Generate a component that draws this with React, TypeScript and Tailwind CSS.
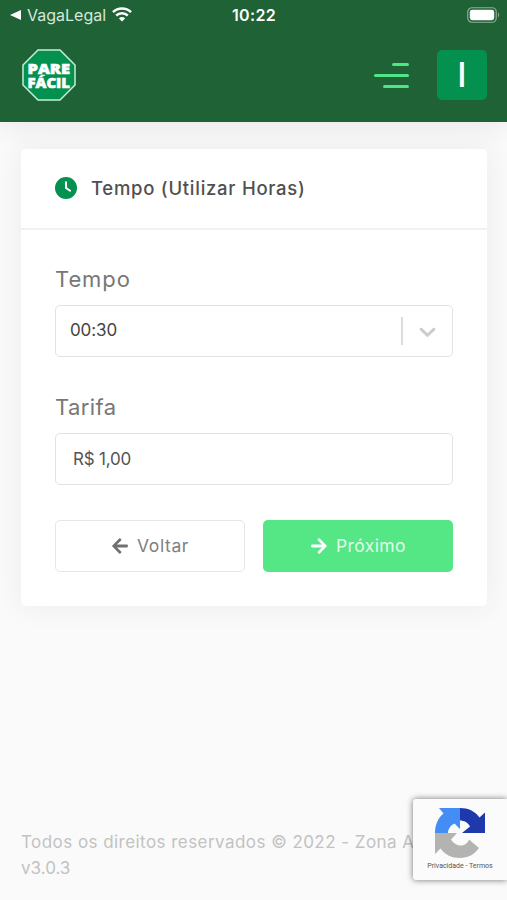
import React from 'react';
import { FaArrowLeft, FaArrowRight } from 'react-icons/fa';
import { FaClock } from 'react-icons/fa6';

const StatusBar: React.FC = () => (
    <div className="relative flex h-[30px] items-center justify-between pl-[10px] pr-[7px] text-white">
        <div className="flex items-center">
            <svg width="11" height="10" viewBox="0 0 11 10" fill="currentColor">
                <path d="M0 5 11 0v10z" />
            </svg>
            <span className="ml-[6px] text-[16px] leading-none text-[#d5e8da]">VagaLegal</span>
            <svg className="mb-[2px] ml-[6px]" width="20" height="15" viewBox="0 0 20 15" fill="none" stroke="currentColor">
                <path d="M1 5.1a13 13 0 0 1 18 0" strokeWidth="2.6" />
                <path d="M4.2 8.5a8.4 8.4 0 0 1 11.600 0" strokeWidth="2.5" />
                <path d="M10 14.6 6.9 11.4a4.6 4.6 0 0 1 6.2 0z" fill="currentColor" stroke="none" />
            </svg>
        </div>
        <span className="absolute left-[232px] text-[16px] font-semibold leading-none tracking-[0.35px]">10:22</span>
        <svg className="mb-[1px]" width="33" height="16" viewBox="0 0 33 16">
            <rect x="0.75" y="0.75" width="28.5" height="14.5" rx="4.2" fill="none" stroke="#8eae98" strokeWidth="1.2" />
            <rect x="2.8" y="2.8" width="24.4" height="10.4" rx="2.4" fill="#fff" />
            <path d="M31 5.6c1.6.8 1.6 4 0 4.8z" fill="#8eae98" />
        </svg>
    </div>
);

const Logo: React.FC = () => (
    <svg width="54" height="52" viewBox="0 0 54 52">
        <path
            d="M16 1h22l15 15v20L38 51H16L1 36V16z"
            fill="#04904f"
            stroke="#c4efd5"
            strokeWidth="1.5"
        />
        <g
            fill="#fff"
            stroke="#fff"
            strokeWidth="0.6"
            fontFamily="'Open Sans', 'Liberation Sans', sans-serif"
            fontWeight="800"
            fontSize="14.5"
        >
            <text x="5.5" y="25" textLength="42.5" lengthAdjust="spacingAndGlyphs">PARE</text>
            <text x="5.5" y="39" textLength="42.5" lengthAdjust="spacingAndGlyphs">FÁCIL</text>
        </g>
    </svg>
);

const Header: React.FC = () => (
    <header className="relative h-[122px] bg-[#1e6236] shadow-[0_0_28px_rgba(60,60,60,0.12)]">
        <StatusBar />
        <div className="flex items-center pl-[22px] pr-5 pt-[19px]">
            <Logo />
            <button type="button" className="ml-auto flex w-[35px] flex-col items-end gap-[8px]">
                <span className="h-[3px] w-[17px] rounded-sm bg-[#50e586]" />
                <span className="h-[3px] w-[35px] rounded-sm bg-[#50e586]" />
                <span className="h-[3px] w-[26px] rounded-sm bg-[#50e586]" />
            </button>
            <div className="ml-[28px] flex size-[50px] items-center justify-center rounded-[5px] bg-[#04904f]">
                <span className="text-[34px] font-medium leading-none text-white">I</span>
            </div>
        </div>
    </header>
);

interface FieldProps {
    label: string;
    labelClass: string;
    children: React.ReactNode;
}

const Field: React.FC<FieldProps> = ({ label, labelClass, children }) => (
    <div>
        <label className={`block h-[26px] text-[22px] leading-[26px] text-[#777] ${labelClass}`}>{label}</label>
        <div className="mt-[13px] flex h-[52px] items-center rounded-[5px] border-[1.5px] border-[#e3e3e3] text-[#555]">
            {children}
        </div>
    </div>
);

const TimeCard: React.FC = () => (
    <section className="ml-[21px] mr-5 mt-[27px] h-[457px] rounded-[5px] bg-white shadow-[0_0_28px_rgba(60,60,60,0.08)]">
        <div className="flex h-[81px] items-center border-b-2 border-[#f0f1f3] pl-[34px]">
            <FaClock className="mb-[2px] size-[22px] text-[#04904f]" />
            <h3 className="ml-[14px] text-[18.5px] font-medium tracking-[0.73px] text-[#505050]">
                Tempo (Utilizar Horas)
            </h3>
        </div>
        <div className="px-[34px] pt-[36px]">
            <Field label="Tempo" labelClass="tracking-[0.9px]">
                <span className="flex-1 pl-[14px] text-[17px] tracking-[-0.1px] text-[#444]">00:30</span>
                <span className="h-[28px] w-[2px] bg-[#dcdcdc]" />
                <svg className="mx-[11px]" width="27" height="27" viewBox="0 0 20 20" fill="#ccc">
                    <path d="M4.516 7.548c0.436-0.446 1.043-0.481 1.576 0l3.908 3.747 3.908-3.747c0.533-0.481 1.141-0.446 1.574 0 0.436 0.445 0.408 1.197 0 1.615-0.406 0.418-4.695 4.502-4.695 4.502-0.217 0.223-0.502 0.335-0.787 0.335s-0.57-0.112-0.789-0.335c0 0-4.287-4.084-4.695-4.502s-0.436-1.17 0-1.615z" />
                </svg>
            </Field>
            <div className="h-[37px]" />
            <Field label="Tarifa" labelClass="tracking-[0.4px]">
                <span className="pl-[17px] pt-px text-[17px] tracking-[-0.2px]">R$ 1,00</span>
            </Field>
            <div className="mt-[35px] grid grid-cols-2 gap-[18px] text-[17.5px]">
                <button
                    type="button"
                    className="flex h-[52px] items-center justify-center gap-[8px] rounded-[5px] border-[1.5px] border-[#e6e6e6] tracking-[0.6px] text-[#808080]"
                >
                    <FaArrowLeft className="size-[18px] text-[#707070]" />
                    Voltar
                </button>
                <button
                    type="button"
                    className="flex h-[52px] items-center justify-center gap-[8px] rounded-[5px] bg-[#55e686] tracking-[0.4px] text-[#e0fbe9]"
                >
                    <FaArrowRight className="size-[18px] text-white" />
                    Próximo
                </button>
            </div>
        </div>
    </section>
);

const RecaptchaBadge: React.FC = () => (
    <div className="absolute right-0 top-[799px] flex h-[81px] w-[94px] flex-col items-center rounded-l-[3px] bg-[#fbfbfb] pt-[9px] shadow-[0_0_6px_rgba(0,0,0,0.55)]">
        <svg width="50" height="50" viewBox="0 0 50 50">
            <path fill="#448df5" d="M4 0H25V21L19.5 15.500C16 17 13 21 13 25H0C0 17 3 10 8.500 5.500Z" />
            <path fill="#1d39ab" d="M25 0C33 0 40 3 44.500 9.500L50 4.500V25H27L35 18.500C33 14.500 29 12.500 25 12.500Z" />
            <path
                fill="#b3b3b1"
                d="M0 25H22L16 31.500C18.500 35.500 22 37.500 26 37.500C29.500 37.500 33 35 34 31.500L44 40C39.500 46.500 33 50 25 50C17 50 10 47 5.500 40.500L0 46Z"
            />
        </svg>
        <span className="mt-[3px] whitespace-nowrap font-['Roboto',sans-serif] text-[7px] leading-[10px] text-[#555]">
            Privacidade - Termos
        </span>
    </div>
);

export default function App() {
    return (
        <div className="relative flex h-[900px] w-[507px] flex-col overflow-hidden bg-[#fafafa] font-['Inter',sans-serif]">
            <Header />
            <TimeCard />
            <footer className="mt-auto pb-[19px] pl-[21px] text-[17px] leading-[26px] text-[#c2c2c2]">
                <p className="whitespace-nowrap tracking-[0.45px]">Todos os direitos reservados © 2022 - Zona A</p>
                <p>v3.0.3</p>
            </footer>
            <RecaptchaBadge />
        </div>
    );
}
